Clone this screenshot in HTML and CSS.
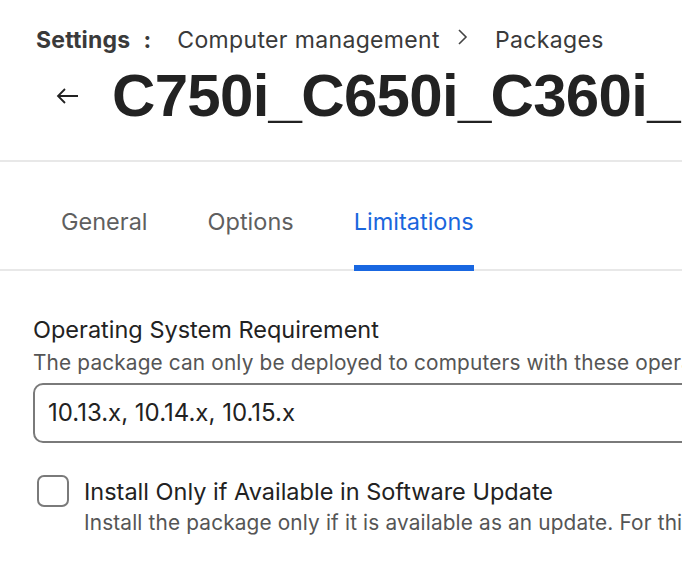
FILE: index.html
```html
<!DOCTYPE html>
<html>
<head>
<meta charset="utf-8">
<link rel="stylesheet" href="styles.css">
</head>
<body>
<div class="page">
  <header class="header">
    <nav class="crumbs">
      <span class="crumb-root">Settings<span class="colon">:</span></span>
      <span class="crumb">Computer management</span>
      <svg class="chev" width="12" height="18" viewBox="0 0 12 18"><path d="M3 2 L10 9 L3 16" fill="none" stroke="#444" stroke-width="1.6"/></svg>
      <span class="crumb">Packages</span>
    </nav>
    <div class="title-row">
      <svg class="back" width="24" height="18" viewBox="0 0 24 18"><path d="M22 9 H2 M9 2 L2 9 L9 16" fill="none" stroke="#222" stroke-width="1.8"/></svg>
      <h1 class="title">C750i_C650i_C360i_C300i_C250i_Package</h1>
    </div>
  </header>
  <div class="tabs">
    <span class="tab">General</span>
    <span class="tab">Options</span>
    <span class="tab active">Limitations</span>
  </div>
  <section class="content">
    <div class="field">
      <div class="label">Operating System Requirement</div>
      <div class="help">The package can only be deployed to computers with these operating systems.</div>
      <div class="input">10.13.x, 10.14.x, 10.15.x</div>
    </div>
    <div class="check-row">
      <span class="checkbox"></span>
      <div class="check-text">
        <div class="label">Install Only if Available in Software Update</div>
        <div class="help">Install the package only if it is available as an update. For this to work the package must be in the catalog.</div>
      </div>
    </div>
  </section>
</div>
</body>
</html>
```
FILE: styles.css
```css
html, body { margin: 0; padding: 0; background: #fff; }
body { font-family: Inter, "Noto Sans", sans-serif; color: #222; overflow: hidden; width: 682px; height: 574px; }
.page { width: 682px; overflow: hidden; }
.header { border-bottom: 2px solid #e8e8e8; padding: 26px 0 0 0; height: 134px; box-sizing: content-box; }
.crumbs { display: flex; align-items: center; white-space: nowrap; padding-left: 36px; height: 28px; font-size: 23px; letter-spacing: 0.35px; color: #3a3a3a; }
.crumb-root { font-weight: 700; color: #3a3a3a; margin-right: 26px; letter-spacing: 0.2px; }
.colon { margin-left: 13px; }
.crumb { color: #3a3a3a; }
.chev { margin: 0 27px 0 16px; position: relative; top: -3px; }
.title-row { display: flex; align-items: center; white-space: nowrap; margin-top: 7px; }
.back { margin-left: 56px; margin-right: 32px; flex: none; }
.title { margin: 0; font-family: "Liberation Sans", Arial, sans-serif; font-weight: 700; font-size: 60px; line-height: 70px; color: #222; letter-spacing: -0.7px; }
.tabs { display: flex; padding-left: 61px; border-bottom: 2px solid #e8e8e8; height: 107px; align-items: flex-end; }
.tab { font-size: 23.5px; color: #5f5f5f; margin-right: 60px; padding-bottom: 28px; border-bottom: 6px solid transparent; margin-bottom: -2px; line-height: 30px; }
.tab.active { color: #1a66dd; border-bottom-color: #1967e1; }
.content { padding: 44px 0 0 33px; white-space: nowrap; }
.label { font-size: 23.5px; color: #222; line-height: 30px; }
.help { font-size: 20.8px; color: #555; line-height: 26px; margin-top: 5px; letter-spacing: 0.15px; }
.input { margin-top: 7px; border: 2px solid #7a7a7a; border-radius: 10px; height: 60px; width: 700px; box-sizing: border-box; padding-left: 13px; font-size: 24px; line-height: 56px; color: #222; }
.check-row { display: flex; margin-top: 31px; margin-left: 4px; }
.checkbox { width: 32px; height: 32px; box-sizing: border-box; border: 2px solid #7a7a7a; border-radius: 7px; flex: none; margin-top: 1px; margin-right: 15px; }
.check-text { padding-top: 3px; }
.check-text .help { margin-top: 3px; }
```
